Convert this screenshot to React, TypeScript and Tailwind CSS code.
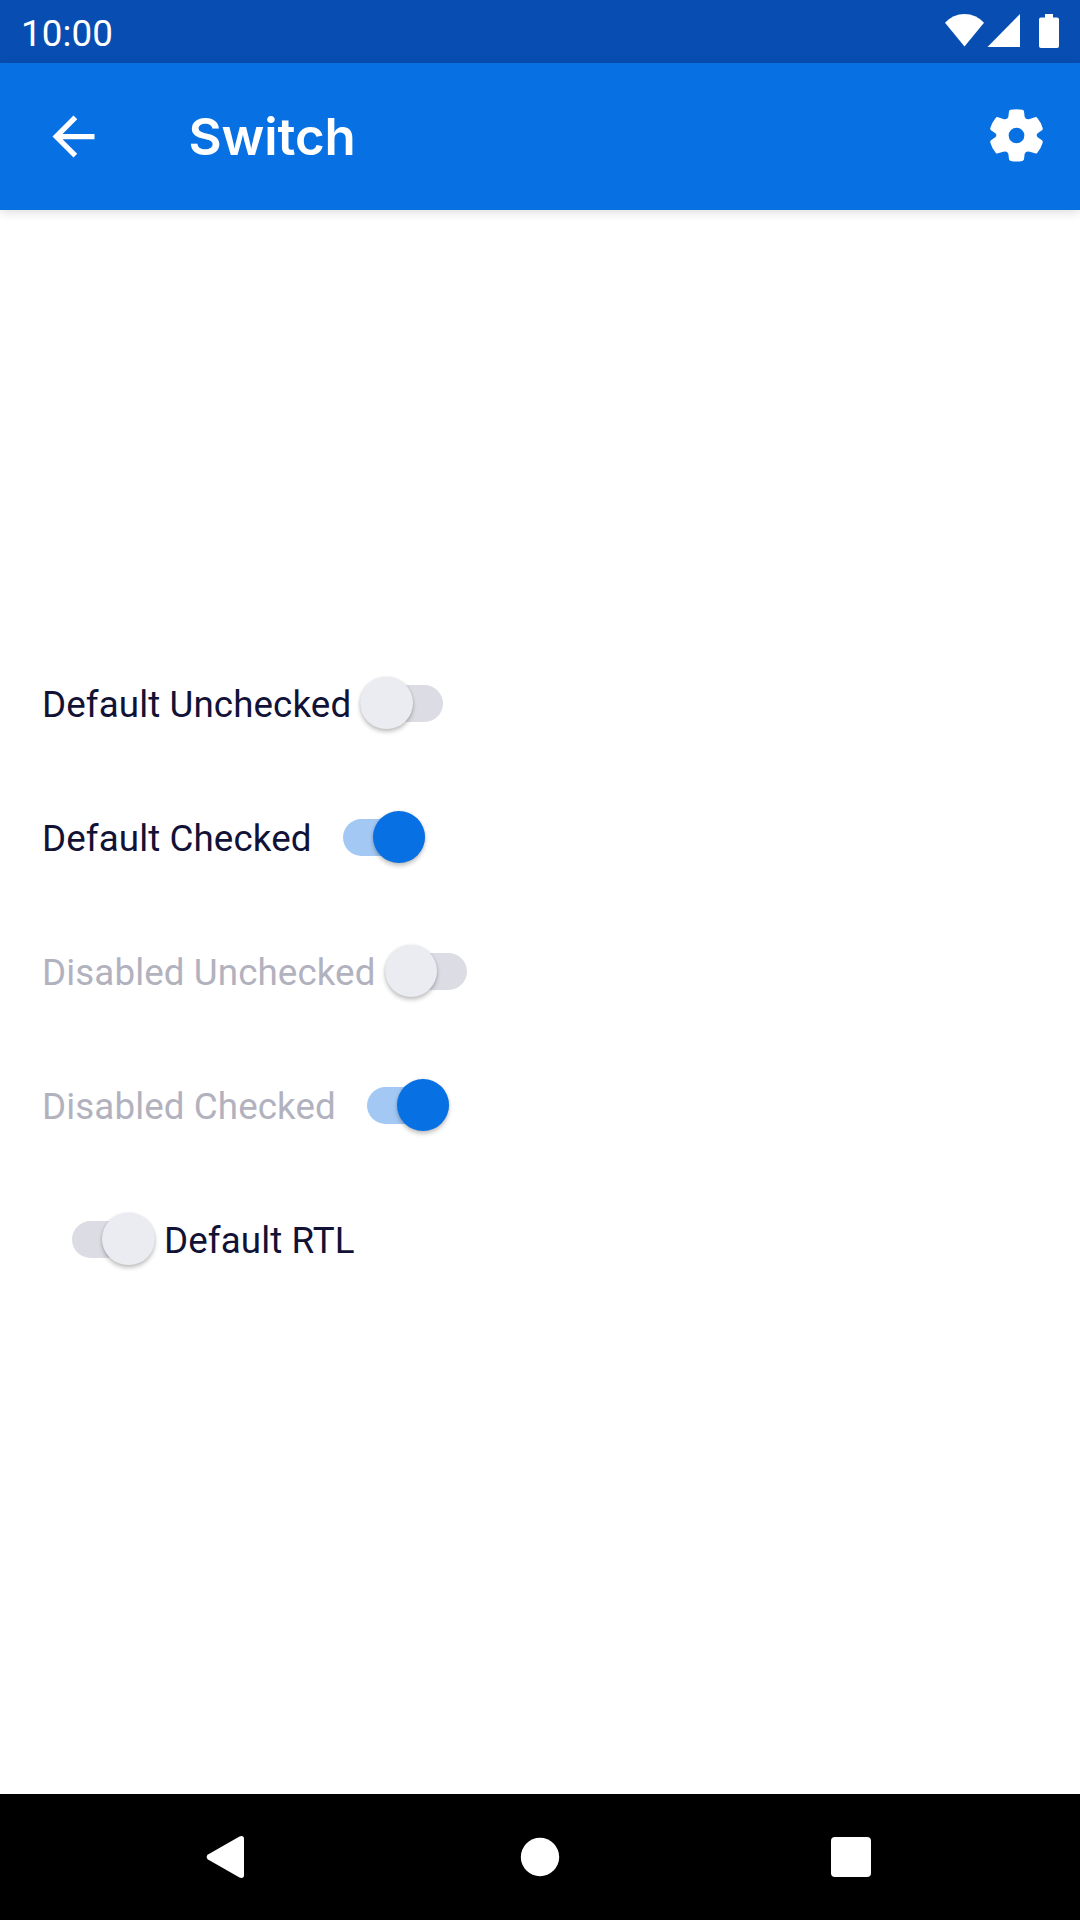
import React from "react";

type SwitchRowProps = {
  label: string;
  checked?: boolean;
  disabled?: boolean;
  rtl?: boolean;
  gap: string;
};

function SwitchRow({ label, checked = false, disabled = false, rtl = false, gap }: SwitchRowProps) {
  const thumbRight = checked || rtl;
  return (
    <div className={`flex h-[134px] items-center ${gap} ${rtl ? "flex-row-reverse justify-end pl-[72px]" : "pl-[42px]"}`}>
      <span className={`pt-[4px] text-[36.75px] leading-[44px] tracking-[0.1px] whitespace-nowrap ${disabled ? "text-[#b2b2bf]" : "text-[#111236]"}`}>
        {label}
      </span>
      <span
        role="switch"
        aria-checked={checked}
        className={`flex h-[37px] w-[82.5px] shrink-0 items-center rounded-full ${thumbRight ? "justify-end" : "justify-start"} ${checked ? "bg-[#a3c8f4]" : "bg-[#dcdce4]"}`}
      >
        <span
          className={`size-[52.5px] shrink-0 rounded-full shadow-[0_3px_4px_rgba(0,0,0,0.22),0_0_3px_rgba(0,0,0,0.1)] ${checked ? "bg-[#0770e3]" : "bg-[#ebecf1]"}`}
        />
      </span>
    </div>
  );
}

export default function App() {
  return (
    <div className="flex h-[1920px] w-[1080px] flex-col overflow-hidden bg-white font-['Roboto',sans-serif]">
      <div className="flex h-[63px] shrink-0 items-center justify-between bg-[#084eb2] pl-[21px] text-white">
        <span className="pt-[5px] text-[36.75px] leading-[44px] tracking-[0.1px]">10:00</span>
        <svg className="h-[63px] w-[140px]" viewBox="940 0 140 63" fill="currentColor">
          <path d="M964.5 46.5 945 22.8Q953 14 964.5 14T984 22.8Z" />
          <path d="M1020 14V47H987.5Z" />
          <path d="M1045 14h8v3.5h4a2 2 0 0 1 2 2V46a2 2 0 0 1-2 2h-16a2 2 0 0 1-2-2V19.500a2 2 0 0 1 2-2h4z" />
        </svg>
      </div>
      <header className="z-10 flex h-[147px] shrink-0 items-center bg-[#0770e3] pl-[42px] pr-[30px] text-white shadow-[0_2px_10px_rgba(0,0,0,0.15)]">
        <svg className="size-[63px]" viewBox="0 0 24 24" fill="currentColor">
          <path d="M20 11H7.830l5.590-5.590L12 4l-8 8 8 8 1.410-1.410L7.830 13H20z" />
        </svg>
        <h1 className="pl-[83.5px] font-['Inter',sans-serif] text-[51px] leading-[60px] font-semibold tracking-[-0.1px]">Switch</h1>
        <svg className="mb-px ml-auto size-[66px]" viewBox="0 0 198 198" fill="currentColor">
          <path
            fillRule="evenodd"
            d="M80 20Q97.500 17 115 20Q119 21 120 25L122 42Q126 51 137 48L153 43Q157 41 160 45Q171 58 176 75Q177 79 174 82L161 91Q155 97 161 103L174 112Q177 115 176 119Q171 136 160 149Q157 153 153 151L137 146Q126 143 122 152L120 169Q119 173 115 174Q97.500 177 80 174Q76 173 75 169L73 152Q69 143 58 146L42 151Q38 153 35 149Q24 136 19 119Q18 115 21 112L34 103Q40 97 34 91L21 82Q18 79 19 75Q24 58 35 45Q38 41 42 43L58 48Q69 51 73 42L75 25Q76 21 80 20ZM97.500 74a23.500 23.500 0 1 0 0 47a23.500 23.500 0 1 0 0-47Z"
          />
        </svg>
      </header>
      <main className="flex grow flex-col pt-[426px]">
        <SwitchRow label="Default Unchecked" gap="gap-[9px]" />
        <SwitchRow label="Default Checked" gap="gap-[31px]" checked />
        <SwitchRow label="Disabled Unchecked" gap="gap-[9px]" disabled />
        <SwitchRow label="Disabled Checked" gap="gap-[31px]" checked disabled />
        <SwitchRow label="Default RTL" gap="gap-[9.500px]" rtl />
      </main>
      <nav className="h-[126px] shrink-0 bg-black text-white">
        <svg className="h-[126px] w-[1080px]" viewBox="0 0 1080 126" fill="currentColor">
          <path d="M208 60.500a3 3 0 0 0 0 5L239.500 83.600Q244 85 244 81V45Q244 41 239.500 42.400Z" />
          <circle cx="540" cy="63" r="19.200" />
          <rect x="831" y="43" width="40" height="40" rx="4" />
        </svg>
      </nav>
    </div>
  );
}
